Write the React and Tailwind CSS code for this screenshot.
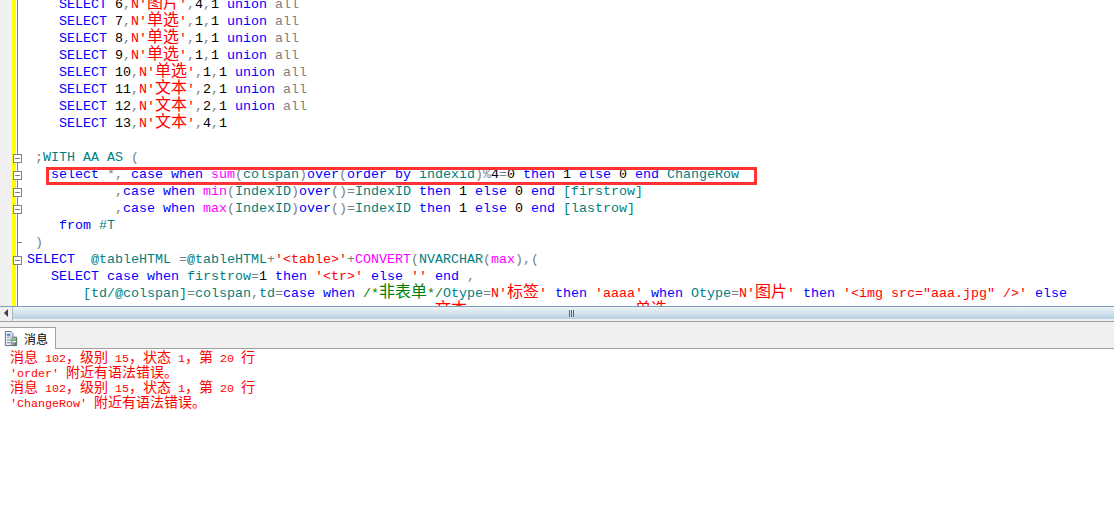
const R = ({ children }) => <span className="text-[#ff0000]">{children}</span>;
const K = ({ children }) => <span className="text-[#0000ff]">{children}</span>;
const T = ({ children }) => <span className="text-[#008080]">{children}</span>;
const G = ({ children }) => <span className="text-[#808080]">{children}</span>;
const F = ({ children }) => <span className="text-[#ff00ff]">{children}</span>;
const C = ({ children }) => <span className="text-[#008000]">{children}</span>;
const B = ({ children }) => <span className="text-black">{children}</span>;
// CJK runs fall through the mono stack to Noto, so they don't move the line's baseline
const Z = ({ children }) => <span className="text-[16px] leading-[0]">{children}</span>;
const M = ({ children }) => <span className="text-[14px] leading-[0]">{children}</span>;

const unionRow = (id, label, a, union = true) => (
  <>
    {"    "}
    <K>SELECT</K> <B>{id}</B>
    <G>,</G>
    <R>
      N'<Z>{label}</Z>'
    </R>
    <G>,</G>
    <B>{a}</B>
    <G>,</G>
    <B>1</B>
    {union && (
      <>
        {" "}
        <K>union</K> <G>all</G>
      </>
    )}
  </>
);

const rows = [
  { code: unionRow(6, "图片", 4) },
  { code: unionRow(7, "单选", 1) },
  { code: unionRow(8, "单选", 1) },
  { code: unionRow(9, "单选", 1) },
  { code: unionRow(10, "单选", 1) },
  { code: unionRow(11, "文本", 2) },
  { code: unionRow(12, "文本", 2) },
  { code: unionRow(13, "文本", 4, false) },
  { code: "" },
  {
    fold: "box",
    code: (
      <>
        {" "}
        <G>;</G>
        <T>WITH AA AS</T> <G>(</G>
      </>
    ),
  },
  {
    fold: "box",
    code: (
      <>
        {"   "}
        <K>select</K> <G>*,</G> <K>case</K> <K>when</K> <F>sum</F>
        <G>(</G>
        <T>colspan</T>
        <G>)</G>
        <K>over</K>
        <G>(</G>
        <K>order by</K> <T>indexid</T>
        <G>)%</G>
        <B>4</B>
        <G>=</G>
        <B>0</B> <K>then</K> <B>1</B> <K>else</K> <B>0</B> <K>end</K> <T>ChangeRow</T>
      </>
    ),
  },
  {
    fold: "box",
    code: (
      <>
        {"           "}
        <G>,</G>
        <K>case</K> <K>when</K> <F>min</F>
        <G>(</G>
        <T>IndexID</T>
        <G>)</G>
        <K>over</K>
        <G>()=</G>
        <T>IndexID</T> <K>then</K> <B>1</B> <K>else</K> <B>0</B> <K>end</K> <T>[firstrow]</T>
      </>
    ),
  },
  {
    fold: "box",
    code: (
      <>
        {"           "}
        <G>,</G>
        <K>case</K> <K>when</K> <F>max</F>
        <G>(</G>
        <T>IndexID</T>
        <G>)</G>
        <K>over</K>
        <G>()=</G>
        <T>IndexID</T> <K>then</K> <B>1</B> <K>else</K> <B>0</B> <K>end</K> <T>[lastrow]</T>
      </>
    ),
  },
  {
    code: (
      <>
        {"    "}
        <K>from</K> <T>#T</T>
      </>
    ),
  },
  {
    fold: "end",
    code: (
      <>
        {" "}
        <G>)</G>
      </>
    ),
  },
  {
    fold: "box",
    code: (
      <>
        <K>SELECT</K>
        {"  "}
        <T>@tableHTML</T> <G>=</G>
        <T>@tableHTML</T>
        <G>+</G>
        <R>{"'<table>'"}</R>
        <G>+</G>
        <F>CONVERT</F>
        <G>(</G>
        <T>NVARCHAR</T>
        <G>(</G>
        <F>max</F>
        <G>),(</G>
      </>
    ),
  },
  {
    code: (
      <>
        {"   "}
        <K>SELECT</K> <K>case</K> <K>when</K> <T>firstrow</T>
        <G>=</G>
        <B>1</B> <K>then</K> <R>{"'<tr>'"}</R> <K>else</K> <R>''</R> <K>end</K> <G>,</G>
      </>
    ),
  },
  {
    code: (
      <>
        {"       "}
        <T>[td/@colspan]</T>
        <G>=</G>
        <T>colspan</T>
        <G>,</G>
        <T>td</T>
        <G>=</G>
        <K>case</K> <K>when</K>{" "}
        <C>
          /*<Z>非表单</Z>*/
        </C>
        <T>Otype</T>
        <G>=</G>
        <R>
          N'<Z>标签</Z>'
        </R>{" "}
        <K>then</K> <R>'aaaa'</R> <K>when</K> <T>Otype</T>
        <G>=</G>
        <R>
          N'<Z>图片</Z>'
        </R>{" "}
        <K>then</K> <R>{"'<img src=\"aaa.jpg\" />'"}</R> <K>else</K>
      </>
    ),
  },
  {
    code: (
      <>
        {" ".repeat(51)}
        <R>
          <Z>文本</Z>
          {" ".repeat(21)}
          <Z>单选</Z>
        </R>
      </>
    ),
  },
];

const Fold = ({ type }) => {
  if (type === "box")
    return (
      <div className="absolute left-[13px] top-[5px] flex h-[9px] w-[9px] items-center justify-center border border-[#808080] bg-white">
        <div className="h-px w-[5px] bg-[#808080]" />
      </div>
    );
  if (type === "end") return <div className="absolute left-[17px] top-[8px] h-px w-[5px] bg-[#808080]" />;
  return null;
};

const TabIcon = () => (
  <svg width="15" height="17" viewBox="0 0 16 18" className="shrink-0">
    <path d="M2.500 1.500h6l2 2v4h4v9h-12z" fill="#e8eef6" stroke="#5d6f88" />
    <path d="M4 4h4v2H4z" fill="#4a78c0" />
    <path d="M4 7h5v1H4zM4 10h5v1H4zM4 13h5v1H4z" fill="#7d8ea6" />
    <path d="M9.500 8.500h5v8h-5z" fill="#fff" stroke="#4d7a4d" />
    <path d="M10 10h4v1.500h-4z" fill="#3f9b3f" />
    <path d="M10 13h2v3h-2z" fill="#d08a2e" />
    <path d="M12 13h2v3h-2z" fill="#3f78c8" />
  </svg>
);

const messages = [
  ["'order'", "附近有语法错误。"],
  ["'ChangeRow'", "附近有语法错误。"],
];

export default function App() {
  return (
    <div className="flex h-[519px] w-[1114px] flex-col overflow-hidden bg-white font-['Liberation_Mono','Noto_Sans_CJK_SC',monospace]">
      {/* editor */}
      <div className="relative h-[306px] shrink-0 overflow-hidden">
        <div className="mt-[-4px]">
          {rows.map((row, i) => (
            <div key={i} className="flex h-[17px]">
              <div className="relative flex h-full w-[27px] shrink-0">
                <div className="w-[12px] bg-[#f0f0f0]" />
                <div className="w-[4px] bg-[#ffff00]" />
                <div className="w-px bg-white" />
                <div className="w-px bg-[#808080]" />
                <Fold type={row.fold} />
              </div>
              <pre className="whitespace-pre font-['Liberation_Mono','Noto_Sans_CJK_SC',monospace] text-[13.33px] leading-[17px]">{row.code}</pre>
            </div>
          ))}
        </div>
        {/* red highlight round the failing line */}
        <div className="absolute left-[46px] top-[167px] h-[18px] w-[711px] border-[3px] border-[#ff3333]" />
      </div>

      {/* horizontal scrollbar */}
      <div className="flex h-[15px] shrink-0 border-t border-[#7f9db9] bg-[#f0f0f0]">
        <div className="flex w-[13px] items-center justify-center border-r border-[#b5b5b5] pb-[2px]">
          <div className="h-0 w-0 border-y-[4px] border-r-[4px] border-y-transparent border-r-[#404040]" />
        </div>
        <div className="flex h-[12px] flex-1 items-center justify-center gap-px bg-gradient-to-b from-[#eef4f8] to-[#b7d0e2] pl-[16px]">
          <div className="h-[7px] w-px bg-[#4d6b82]" />
          <div className="h-[7px] w-px bg-[#4d6b82]" />
          <div className="h-[7px] w-px bg-[#4d6b82]" />
        </div>
      </div>

      {/* results tab */}
      <div className="flex h-[28px] shrink-0 border-y border-[#a0a0a0] bg-[#f0f0f0] pt-[5px]">
        <div className="mb-[-1px] flex w-[56px] items-center gap-[6px] border-r border-t border-[#a0a0a0] bg-white pl-[3px]">
          <TabIcon />
          <span className="font-['Noto_Sans_CJK_SC',sans-serif] text-[12px] text-black">消息</span>
        </div>
      </div>

      {/* messages */}
      <div className="pl-[10px] pt-[3px] text-[#ff0000]">
        {messages.map(([name, text], i) => (
          <div key={i}>
            <div className="h-[15px] whitespace-pre text-[11.67px] leading-[15px]">
              <M>消息</M> 102<M>，级别</M> 15<M>，状态</M> 1<M>，第</M> 20 <M>行</M>
            </div>
            <div className="h-[15px] whitespace-pre text-[11.67px] leading-[15px]">
              {name} <M>{text}</M>
            </div>
          </div>
        ))}
      </div>
    </div>
  );
}
